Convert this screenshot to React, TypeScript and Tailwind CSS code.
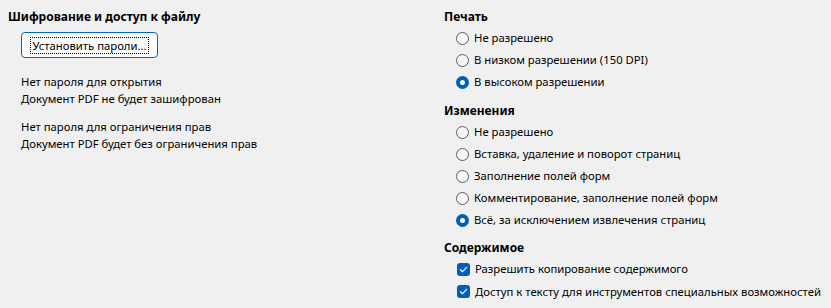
const font = { fontFamily: '"Noto Sans", "Open Sans", sans-serif' }

function Radio({ label, checked }: { label: string; checked?: boolean }) {
  return (
    <div className="flex h-[22px] items-center pl-3">
      {checked ? (
        <span className="flex h-[13px] w-[13px] shrink-0 items-center justify-center rounded-full bg-[#005fb8]">
          <span className="h-[5px] w-[5px] rounded-full bg-white" />
        </span>
      ) : (
        <span className="h-[13px] w-[13px] shrink-0 rounded-full border border-[#5c5c5c] bg-[#f7f7f7]" />
      )}
      <span className="ml-[5px]">{label}</span>
    </div>
  )
}

function Check({ label }: { label: string }) {
  return (
    <div className="flex h-[22.5px] items-center pl-[13px]">
      <span className="flex h-[13px] w-[13px] shrink-0 items-center justify-center rounded-[3px] bg-[#005fb8]">
        <svg width="9" height="9" viewBox="0 0 9 9" fill="none">
          <path d="M1.5 4.7 L3.6 6.7 L7.6 2.4" stroke="white" strokeWidth="1.2" strokeLinecap="round" strokeLinejoin="round" />
        </svg>
      </span>
      <span className="ml-[5px]">{label}</span>
    </div>
  )
}

export default function App() {
  return (
    <div
      className="grid h-[308px] w-[831px] grid-cols-[436px_1fr] whitespace-nowrap bg-[#f0f0f0] pl-2 text-[11.3px] leading-[16px] text-black"
      style={font}
    >
      {/* left column */}
      <div className="pt-[9px]">
        <div className="text-[12px] font-bold">Шифрование и доступ к файлу</div>
        <button className="mt-[7px] ml-[13px] flex h-[26px] w-[137px] items-center justify-center rounded-[4px] border border-[#0067c0] bg-[#fdfdfd]">
          <span className="border border-dotted border-black px-[1px] leading-[15px]">Установить пароли...</span>
        </button>
        <div className="mt-[15px] ml-[13px] leading-[17px]">
          <div>Нет пароля для открытия</div>
          <div>Документ PDF не будет зашифрован</div>
        </div>
        <div className="mt-[11px] ml-[13px] leading-[17px]">
          <div>Нет пароля для ограничения прав</div>
          <div>Документ PDF будет без ограничения прав</div>
        </div>
      </div>

      {/* right column */}
      <div className="pt-[9px]">
        <div className="text-[12px] font-bold">Печать</div>
        <div className="mt-[2px]">
          <Radio label="Не разрешено" />
          <Radio label="В низком разрешении (150 DPI)" />
          <Radio label="В высоком разрешении" checked />
        </div>

        <div className="mt-[10px] text-[12px] font-bold">Изменения</div>
        <div className="mt-[2px]">
          <Radio label="Не разрешено" />
          <Radio label="Вставка, удаление и поворот страниц" />
          <Radio label="Заполнение полей форм" />
          <Radio label="Комментирование, заполнение полей форм" />
          <Radio label="Всё, за исключением извлечения страниц" checked />
        </div>

        <div className="mt-[9px] text-[12px] font-bold">Содержимое</div>
        <div className="mt-[2px]">
          <Check label="Разрешить копирование содержимого" />
          <Check label="Доступ к тексту для инструментов специальных возможностей" />
        </div>
      </div>
    </div>
  )
}
